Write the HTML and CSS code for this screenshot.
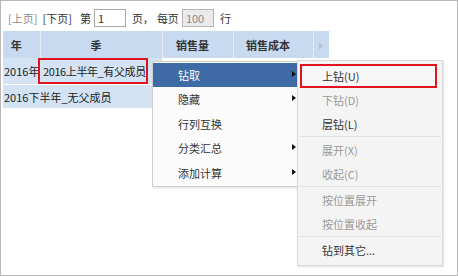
FILE: index.html
```html
<!DOCTYPE html>
<html lang="zh-CN">
<head>
    <meta charset="UTF-8">
    <title>钻取菜单</title>
    <link rel="stylesheet" href="styles.css">
</head>
<body>
    <div class="frame">
        <div class="pager">
            <span class="link disabled">[上页]</span>
            <span class="link">[下页]</span>
            <span class="label">第</span>
            <input class="page-input" type="text" value="1">
            <span class="label">页，</span>
            <span class="label">每页</span>
            <input class="page-input size" type="text" value="100" disabled>
            <span class="label">行</span>
        </div>

        <table class="grid">
            <colgroup>
                <col class="c-year">
                <col class="c-season">
                <col class="c-qty">
                <col class="c-cost">
                <col class="c-more">
            </colgroup>
            <tr class="head">
                <th>年</th>
                <th>季</th>
                <th>销售量</th>
                <th>销售成本</th>
                <th class="more"><span class="more-arrow"></span></th>
            </tr>
            <tr class="row">
                <td class="dim">2016年</td>
                <td class="dim"><span class="picked">2016上半年_有父成员</span></td>
                <td></td>
                <td></td>
                <td></td>
            </tr>
            <tr class="row">
                <td class="dim" colspan="2">2016下半年_无父成员</td>
                <td></td>
                <td></td>
                <td></td>
            </tr>
        </table>

        <ul class="menu main-menu">
            <li class="item active has-sub">钻取</li>
            <li class="item has-sub">隐藏</li>
            <li class="item">行列互换</li>
            <li class="item has-sub">分类汇总</li>
            <li class="item has-sub">添加计算</li>
        </ul>

        <ul class="menu sub-menu">
            <li class="item picked-item">上钻(U)</li>
            <li class="item off">下钻(D)</li>
            <li class="item">层钻(L)</li>
            <li class="sep"></li>
            <li class="item off">展开(X)</li>
            <li class="item off">收起(C)</li>
            <li class="sep"></li>
            <li class="item off">按位置展开</li>
            <li class="item off">按位置收起</li>
            <li class="sep"></li>
            <li class="item">钻到其它...</li>
        </ul>
    </div>
</body>
</html>
```

FILE: styles.css
```css
* {
    box-sizing: border-box;
}
body {
    margin: 0;
    background-color: #fff;
    font-family: "Noto Sans CJK SC", "Noto Sans", sans-serif;
    font-size: 11px;
    color: #333;
}
.frame {
    position: relative;
    width: 458px;
    height: 276px;
    border: 1px solid #b8b8b8;
    background-color: #fff;
    overflow: hidden;
}
.pager {
    display: flex;
    align-items: center;
    height: 18px;
    margin: 8px 0 0 7px;
}
.link {
    margin-right: 5px;
    color: #333;
}
.link.disabled {
    color: #8a8a8a;
}
.label {
    margin-left: 3px;
}
.page-input {
    width: 32px;
    height: 18px;
    margin: 0 3px 0 3px;
    padding: 0 3px;
    border: 1px solid #a9a9a9;
    font-family: inherit;
    font-size: 11px;
    color: #333;
    background-color: #fff;
}
.page-input.size {
    background-color: #eaeaea;
    color: #8a8a8a;
    border-color: #b5b5b5;
}
.grid {
    border-collapse: collapse;
    table-layout: fixed;
    margin: 4px 0 0 2px;
    width: 326px;
}
.c-year { width: 37px; }
.c-season { width: 122px; }
.c-qty { width: 71px; }
.c-cost { width: 80px; }
.c-more { width: 16px; }
.grid th {
    height: 27px;
    padding: 0 10px 0 0;
    background-color: #c8daef;
    border-right: 1px solid #e6edf6;
    font-weight: bold;
    text-align: center;
    color: #333;
}
.grid th.more {
    border-right: none;
    padding: 0;
}
.more-arrow {
    display: inline-block;
    width: 0;
    height: 0;
    border-top: 4px solid transparent;
    border-bottom: 4px solid transparent;
    border-left: 4px solid #b8c4d2;
}
.grid td {
    padding: 0;
    white-space: nowrap;
    overflow: visible;
    border-bottom: 1px solid #fff;
}
.row:nth-child(2) td {
    height: 26px;
}
.row:nth-child(3) td {
    height: 24px;
}
.grid td.dim {
    padding-left: 1px;
    background-color: #d4e3f4;
    color: #222;
}
.picked {
    display: inline-block;
    margin-left: -3px;
    padding: 3px 0 0 3px;
    width: 110px;
    height: 26px;
    border: 2px solid #e0141e;
    letter-spacing: -0.4px;
}
.menu {
    position: absolute;
    margin: 0;
    list-style: none;
    border: 1px solid #cfcfcf;
    box-shadow: 1px 1px 2px rgba(0, 0, 0, 0.12);
}
.main-menu {
    left: 151px;
    top: 60px;
    width: 146px;
    padding: 1px 0;
    background-color: #fbfbfb;
}
.sub-menu {
    left: 296px;
    top: 59px;
    width: 146px;
    padding: 3px 0;
    background-color: #f4f4f4;
    border-color: #d8d8d8;
}
.item {
    position: relative;
    height: 24.4px;
    line-height: 24px;
    padding-left: 25px;
    color: #333;
}
.sub-menu .item {
    height: 24px;
    padding-left: 24px;
}
.item.active {
    background-color: #3e6ba6;
    color: #fff;
}
.item.has-sub::after {
    content: "";
    position: absolute;
    right: 1px;
    top: 8px;
    border-top: 3.5px solid transparent;
    border-bottom: 3.5px solid transparent;
    border-left: 4px solid #111;
}
.item.off {
    color: #9a9a9a;
}
.sub-menu .picked-item {
    margin: 0 5px 0 2px;
    padding-left: 20px;
    border: 2px solid #e0141e;
    line-height: 20px;
    background-color: #f7f7f7;
}
.sep {
    height: 1px;
    margin: 0 1px 1px 1px;
    background-color: #e2e2e2;
}
```
